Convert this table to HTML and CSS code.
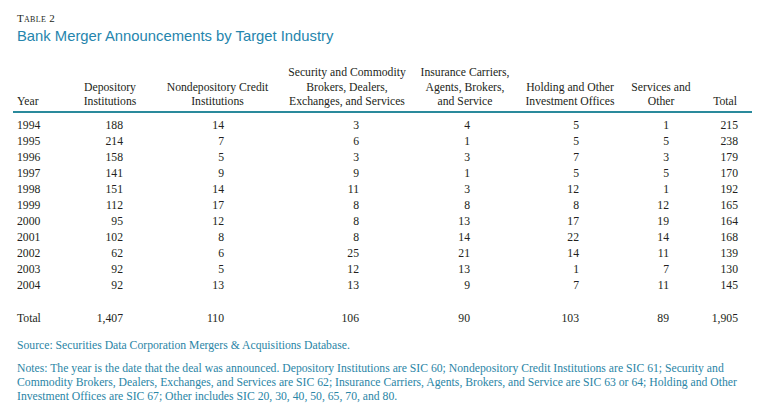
FILE: index.html
```html
<!DOCTYPE html>
<html lang="en">
<head>
<meta charset="utf-8">
<title>Table 2</title>
<link rel="stylesheet" href="styles.css">
</head>
<body>
<div class="page">
  <div class="label">Table 2</div>
  <h1 class="title">Bank Merger Announcements by Target Industry</h1>
  <table class="data">
    <colgroup>
      <col class="c-year"><col class="c-dep"><col class="c-non"><col class="c-sec"><col class="c-ins"><col class="c-hold"><col class="c-serv"><col class="c-tot">
    </colgroup>
    <thead>
      <tr>
        <th class="year">Year</th>
        <th class="dep">Depository<br>Institutions</th>
        <th class="non">Nondepository Credit<br>Institutions</th>
        <th class="sec">Security and Commodity<br>Brokers, Dealers,<br>Exchanges, and Services</th>
        <th class="ins">Insurance Carriers,<br>Agents, Brokers,<br>and Service</th>
        <th class="hold">Holding and Other<br>Investment Offices</th>
        <th class="serv">Services and<br>Other</th>
        <th class="tot">Total</th>
      </tr>
    </thead>
    <tbody>
      <tr class="first"><td class="year">1994</td><td class="dep">188</td><td class="non">14</td><td class="sec">3</td><td class="ins">4</td><td class="hold">5</td><td class="serv">1</td><td class="tot">215</td></tr>
      <tr><td class="year">1995</td><td class="dep">214</td><td class="non">7</td><td class="sec">6</td><td class="ins">1</td><td class="hold">5</td><td class="serv">5</td><td class="tot">238</td></tr>
      <tr><td class="year">1996</td><td class="dep">158</td><td class="non">5</td><td class="sec">3</td><td class="ins">3</td><td class="hold">7</td><td class="serv">3</td><td class="tot">179</td></tr>
      <tr><td class="year">1997</td><td class="dep">141</td><td class="non">9</td><td class="sec">9</td><td class="ins">1</td><td class="hold">5</td><td class="serv">5</td><td class="tot">170</td></tr>
      <tr><td class="year">1998</td><td class="dep">151</td><td class="non">14</td><td class="sec">11</td><td class="ins">3</td><td class="hold">12</td><td class="serv">1</td><td class="tot">192</td></tr>
      <tr><td class="year">1999</td><td class="dep">112</td><td class="non">17</td><td class="sec">8</td><td class="ins">8</td><td class="hold">8</td><td class="serv">12</td><td class="tot">165</td></tr>
      <tr><td class="year">2000</td><td class="dep">95</td><td class="non">12</td><td class="sec">8</td><td class="ins">13</td><td class="hold">17</td><td class="serv">19</td><td class="tot">164</td></tr>
      <tr><td class="year">2001</td><td class="dep">102</td><td class="non">8</td><td class="sec">8</td><td class="ins">14</td><td class="hold">22</td><td class="serv">14</td><td class="tot">168</td></tr>
      <tr><td class="year">2002</td><td class="dep">62</td><td class="non">6</td><td class="sec">25</td><td class="ins">21</td><td class="hold">14</td><td class="serv">11</td><td class="tot">139</td></tr>
      <tr><td class="year">2003</td><td class="dep">92</td><td class="non">5</td><td class="sec">12</td><td class="ins">13</td><td class="hold">1</td><td class="serv">7</td><td class="tot">130</td></tr>
      <tr><td class="year">2004</td><td class="dep">92</td><td class="non">13</td><td class="sec">13</td><td class="ins">9</td><td class="hold">7</td><td class="serv">11</td><td class="tot">145</td></tr>
      <tr class="total"><td class="year">Total</td><td class="dep">1,407</td><td class="non">110</td><td class="sec">106</td><td class="ins">90</td><td class="hold">103</td><td class="serv">89</td><td class="tot">1,905</td></tr>
    </tbody>
  </table>
  <p class="source">Source: Securities Data Corporation Mergers &amp; Acquisitions Database.</p>
  <p class="notes">Notes: The year is the date that the deal was announced. Depository Institutions are SIC 60; Nondepository Credit Institutions are SIC 61; Security and Commodity Brokers, Dealers, Exchanges, and Services are SIC 62; Insurance Carriers, Agents, Brokers, and Service are SIC 63 or 64; Holding and Other Investment Offices are SIC 67; Other includes SIC 20, 30, 40, 50, 65, 70, and 80.</p>
</div>
</body>
</html>
```

FILE: styles.css
```css
html, body {
  margin: 0;
  padding: 0;
  background: #ffffff;
}

.page {
  padding: 11px 0 0 13px;
  font-family: "Liberation Serif", "Times New Roman", serif;
  font-size: 11.7px;
  color: #231f20;
}

.label {
  padding-left: 4px;
  font-variant: small-caps;
  font-size: 11px;
  line-height: 14px;
  letter-spacing: 0.3px;
  color: #231f20;
}

.title {
  margin: 2px 0 0 0;
  padding-left: 4px;
  font-family: "Liberation Sans", Arial, sans-serif;
  font-weight: normal;
  font-size: 14.8px;
  line-height: 18px;
  color: #2585ad;
}

.data {
  margin-top: 21px;
  border-collapse: collapse;
  table-layout: fixed;
  width: 739px;
}

.c-year { width: 57px; }
.c-dep { width: 90px; }
.c-non { width: 115px; }
.c-sec { width: 140px; }
.c-ins { width: 100px; }
.c-hold { width: 107px; }
.c-serv { width: 78px; }
.c-tot { width: 52px; }

.data th {
  font-weight: normal;
  line-height: 14.5px;
  vertical-align: bottom;
  text-align: center;
  white-space: nowrap;
  padding: 0 0 1px 0;
  border-bottom: 2px solid #2a8a9c;
}

.data th.year { text-align: left; padding-left: 4px; }
.data th.dep { padding-right: 10px; }
.data th.sec { padding-left: 4px; }
.data th.hold { padding-left: 3px; }
.data th.tot { text-align: right; padding-right: 15px; }

.data td {
  line-height: 16px;
  padding: 0;
  text-align: right;
  white-space: nowrap;
}

.data tr.first td { padding-top: 5px; }
.data tr.total td { padding-top: 17px; }

.data td.year { text-align: left; padding-left: 4px; }
.data td.dep { padding-right: 37px; }
.data td.non { padding-right: 51px; }
.data td.sec { padding-right: 56px; }
.data td.ins { padding-right: 45px; }
.data td.hold { padding-right: 43px; }
.data td.serv { padding-right: 31px; }
.data td.tot { padding-right: 14px; }

.source,
.notes {
  margin: 0;
  padding-left: 4px;
  color: #2a85a6;
  line-height: 14px;
}

.source { margin-top: 12px; }

.notes {
  margin-top: 9px;
  width: 728px;
}
```
